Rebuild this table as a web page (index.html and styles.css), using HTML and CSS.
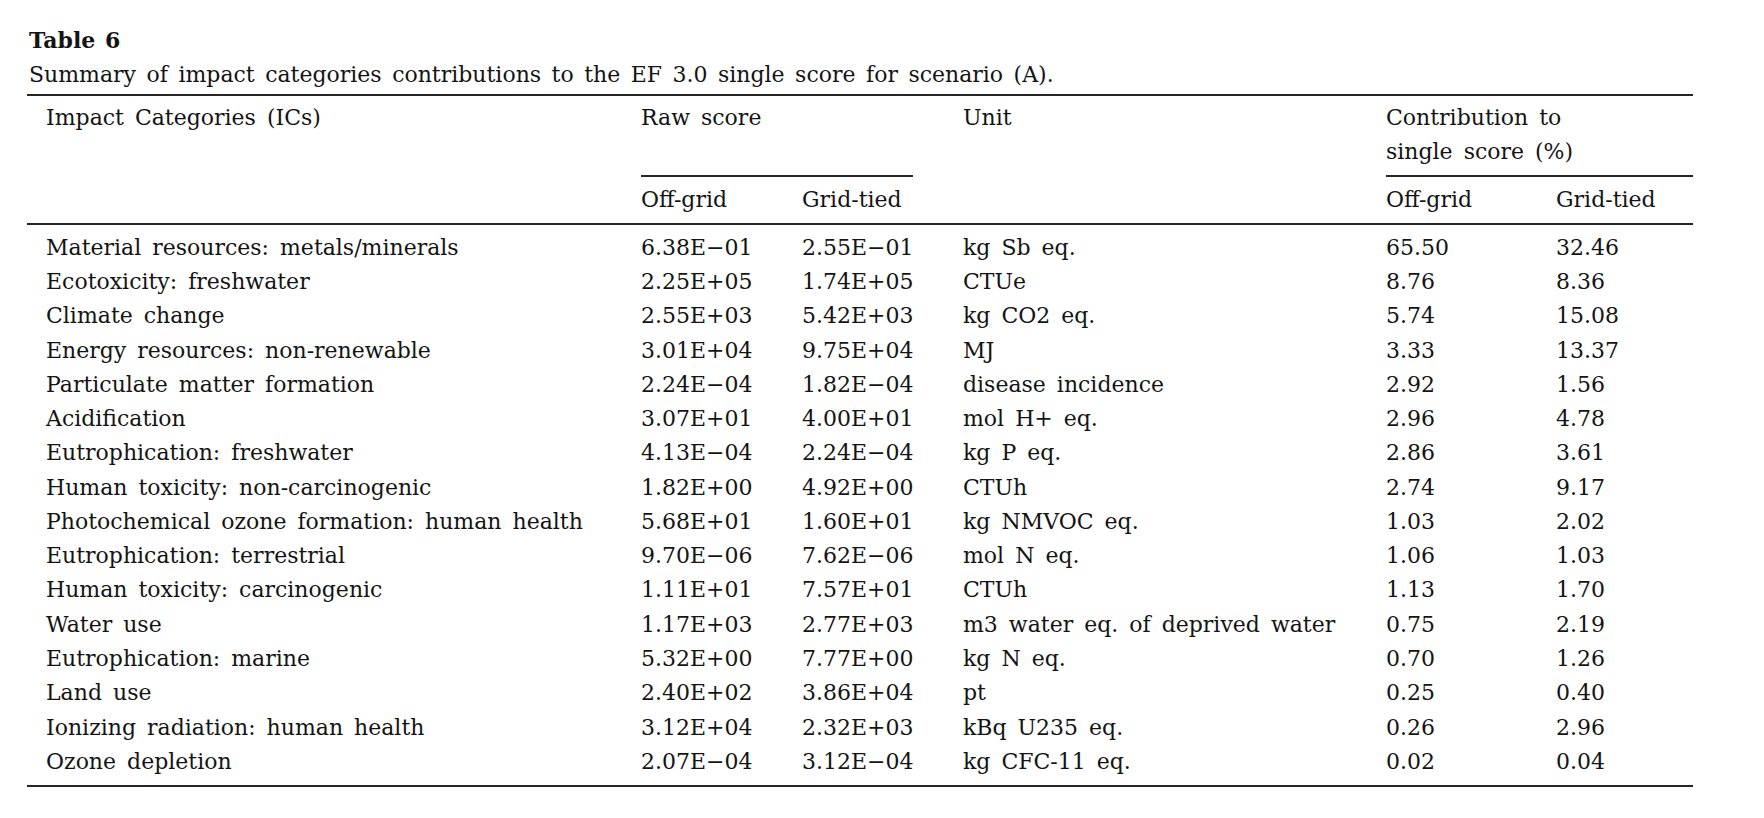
FILE: index.html
```html
<!DOCTYPE html>
<html lang="en">
<head>
<meta charset="utf-8">
<title>Table 6</title>
<link rel="stylesheet" href="styles.css">
</head>
<body>
<div class="page">
  <div class="title">Table 6</div>
  <div class="caption">Summary of impact categories contributions to the EF 3.0 single score for scenario (A).</div>
  <div class="tbl">
    <div class="thead">
      <div class="h-ic">Impact Categories (ICs)</div>
      <div class="h-raw">Raw score</div>
      <div class="h-unit">Unit</div>
      <div class="h-con">Contribution to<br>single score (%)</div>
      <div class="h-sub c2">Off-grid</div>
      <div class="h-sub c3">Grid-tied</div>
      <div class="h-sub c5">Off-grid</div>
      <div class="h-sub c6">Grid-tied</div>
    </div>
    <div class="tbody">
      <div class="row"><div class="first">Material resources: metals/minerals</div><div>6.38E−01</div><div>2.55E−01</div><div>kg Sb eq.</div><div>65.50</div><div>32.46</div></div>
      <div class="row"><div class="first">Ecotoxicity: freshwater</div><div>2.25E+05</div><div>1.74E+05</div><div>CTUe</div><div>8.76</div><div>8.36</div></div>
      <div class="row"><div class="first">Climate change</div><div>2.55E+03</div><div>5.42E+03</div><div>kg CO2 eq.</div><div>5.74</div><div>15.08</div></div>
      <div class="row"><div class="first">Energy resources: non-renewable</div><div>3.01E+04</div><div>9.75E+04</div><div>MJ</div><div>3.33</div><div>13.37</div></div>
      <div class="row"><div class="first">Particulate matter formation</div><div>2.24E−04</div><div>1.82E−04</div><div>disease incidence</div><div>2.92</div><div>1.56</div></div>
      <div class="row"><div class="first">Acidification</div><div>3.07E+01</div><div>4.00E+01</div><div>mol H+ eq.</div><div>2.96</div><div>4.78</div></div>
      <div class="row"><div class="first">Eutrophication: freshwater</div><div>4.13E−04</div><div>2.24E−04</div><div>kg P eq.</div><div>2.86</div><div>3.61</div></div>
      <div class="row"><div class="first">Human toxicity: non-carcinogenic</div><div>1.82E+00</div><div>4.92E+00</div><div>CTUh</div><div>2.74</div><div>9.17</div></div>
      <div class="row"><div class="first">Photochemical ozone formation: human health</div><div>5.68E+01</div><div>1.60E+01</div><div>kg NMVOC eq.</div><div>1.03</div><div>2.02</div></div>
      <div class="row"><div class="first">Eutrophication: terrestrial</div><div>9.70E−06</div><div>7.62E−06</div><div>mol N eq.</div><div>1.06</div><div>1.03</div></div>
      <div class="row"><div class="first">Human toxicity: carcinogenic</div><div>1.11E+01</div><div>7.57E+01</div><div>CTUh</div><div>1.13</div><div>1.70</div></div>
      <div class="row"><div class="first">Water use</div><div>1.17E+03</div><div>2.77E+03</div><div>m3 water eq. of deprived water</div><div>0.75</div><div>2.19</div></div>
      <div class="row"><div class="first">Eutrophication: marine</div><div>5.32E+00</div><div>7.77E+00</div><div>kg N eq.</div><div>0.70</div><div>1.26</div></div>
      <div class="row"><div class="first">Land use</div><div>2.40E+02</div><div>3.86E+04</div><div>pt</div><div>0.25</div><div>0.40</div></div>
      <div class="row"><div class="first">Ionizing radiation: human health</div><div>3.12E+04</div><div>2.32E+03</div><div>kBq U235 eq.</div><div>0.26</div><div>2.96</div></div>
      <div class="row"><div class="first">Ozone depletion</div><div>2.07E−04</div><div>3.12E−04</div><div>kg CFC-11 eq.</div><div>0.02</div><div>0.04</div></div>
    </div>
  </div>
</div>
</body>
</html>
```

FILE: styles.css
```css
html, body {
  margin: 0;
  padding: 0;
  background: #ffffff;
}
body {
  font-family: "DejaVu Serif", "Liberation Serif", serif;
  font-size: 22px;
  color: #141414;
  word-spacing: 4px;
}
.page {
  padding: 27px 0 0 27px;
}
.title {
  font-weight: bold;
  line-height: 27px;
  margin-left: 2px;
  word-spacing: 2px;
}
.caption {
  line-height: 27px;
  margin: 7px 0 6px 2px;
  word-spacing: 3.5px;
}
.tbl {
  width: 1666px;
  border-top: 2px solid #262626;
  border-bottom: 2px solid #262626;
}
.thead,
.row {
  display: grid;
  grid-template-columns: 614px 161px 161px 423px 170px 137px;
  line-height: 34.27px;
}
.thead > div {
  white-space: nowrap;
}
.h-ic {
  grid-column: 1;
  grid-row: 1 / span 2;
  padding: 5px 0 0 19px;
  border-bottom: 2px solid #262626;
}
.h-raw {
  grid-column: 2 / span 2;
  grid-row: 1;
  padding: 5px 0 5px 0;
  margin-right: 50px;
  border-bottom: 2px solid #262626;
}
.h-unit {
  grid-column: 4;
  grid-row: 1 / span 2;
  padding-top: 5px;
  border-bottom: 2px solid #262626;
}
.h-con {
  grid-column: 5 / span 2;
  grid-row: 1;
  padding: 5px 0 5px 0;
  border-bottom: 2px solid #262626;
}
.h-sub {
  grid-row: 2;
  padding: 6px 0 6px 0;
  border-bottom: 2px solid #262626;
}
.c2 { grid-column: 2; }
.c3 { grid-column: 3; }
.c5 { grid-column: 5; }
.c6 { grid-column: 6; }
.tbody {
  padding: 6px 0 6px 0;
}
.row > div {
  white-space: nowrap;
}
.row > .first {
  padding-left: 19px;
}
```
